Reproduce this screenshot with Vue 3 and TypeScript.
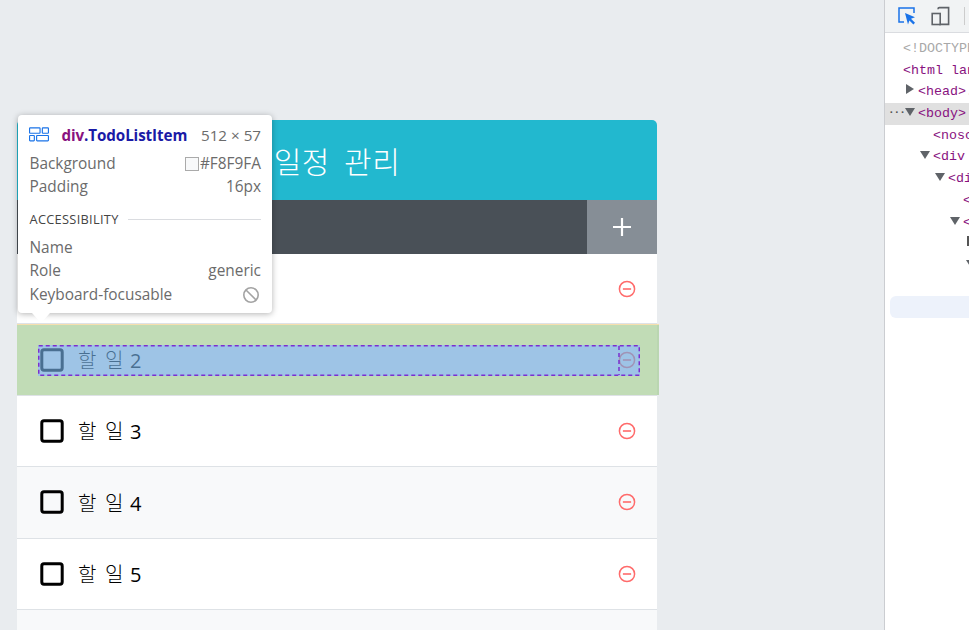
<script setup lang="ts">
interface Row { word: string; num: number }
const rows: Row[] = [1, 2, 3, 4, 5, 6].map((n) => ({ word: '할 일', num: n }))
interface Line { text: string; cls: string; indent: number; arrow?: string }
const lines: Line[] = [
  { text: '<!DOCTYPE html>', cls: 'doctype', indent: 18 },
  { text: '<html lang="ko">', cls: '', indent: 18 },
  { text: '<head>...</head>', cls: '', indent: 33, arrow: 'right' },
  { text: '<body>', cls: 'sel', indent: 33, arrow: 'down' },
  { text: '<noscript>', cls: '', indent: 48 },
  { text: '<div id="root">', cls: '', indent: 48, arrow: 'down' },
  { text: '<div class="a">', cls: '', indent: 63, arrow: 'down' },
  { text: '<h1>', cls: '', indent: 78 },
  { text: '<div>', cls: '', indent: 78, arrow: 'down' },
]
</script>

<template>
  <div class="page">
    <main class="main">
      <section class="card">
        <header class="title">일정 관리</header>
        <div class="bar">
          <div class="field"></div>
          <div class="add">
            <svg width="20" height="20" viewBox="0 0 20 20"><path d="M10 1v18M1 10h18" stroke="#fff" stroke-width="2.2" fill="none" /></svg>
          </div>
        </div>
        <div class="list">
          <div v-for="r in rows" :key="r.num" class="item">
            <svg class="check" width="26" height="26" viewBox="0 0 26 26"><rect x="2.8" y="2.8" width="20.4" height="20.4" rx="2.2" fill="none" stroke="#000" stroke-width="3" /></svg>
            <span class="label">{{ r.word }} <span class="num">{{ r.num }}</span></span>
            <svg class="remove" width="20" height="20" viewBox="0 0 20 20"><circle cx="10" cy="10" r="7.6" fill="none" stroke="#ff6b6b" stroke-width="1.5" /><path d="M5.9 10h8.2" stroke="#ff6b6b" stroke-width="1.6" /></svg>
          </div>
        </div>
      </section>

      <div class="hl">
        <div class="hl-content">
          <svg class="hl-lines" width="602" height="31" viewBox="0 0 602 31" fill="none" stroke="#7b2fd0" stroke-width="1.5" stroke-dasharray="4 3"><rect x=".75" y=".75" width="600.5" height="29.5" /><path d="M581 1v29" /></svg>
        </div>
      </div>

      <div class="tip">
        <div class="tip-head">
          <svg class="tip-icon" width="20" height="15" viewBox="0 0 21 15" fill="none" stroke="#1a73e8" stroke-width="1.2"><rect x=".6" y=".6" width="11" height="5.6" rx=".6" /><rect x="14" y=".6" width="6.4" height="5.6" rx=".6" /><rect x=".6" y="8.6" width="5" height="5.6" rx=".6" /><rect x="8" y="8.6" width="12.4" height="5.6" rx=".6" /></svg>
          <span class="tip-name"><b class="tag">div</b><b class="klass">.TodoListItem</b></span>
          <span class="tip-size">512 × 57</span>
        </div>
        <div class="tip-row"><span>Background</span><span class="val"><i class="swatch"></i>#F8F9FA</span></div>
        <div class="tip-row"><span>Padding</span><span class="val">16px</span></div>
        <div class="tip-sec"><span>ACCESSIBILITY</span><i class="rule"></i></div>
        <div class="tip-row"><span>Name</span><span class="val"></span></div>
        <div class="tip-row"><span>Role</span><span class="val">generic</span></div>
        <div class="tip-row kb"><span>Keyboard-focusable</span>
          <svg width="18" height="18" viewBox="0 0 18 18" fill="none" stroke="#a3a3a3" stroke-width="1.6"><circle cx="9" cy="9" r="7.2" /><path d="M4 4l10 10" /></svg>
        </div>
        <i class="tip-arrow"></i>
      </div>
    </main>

    <aside class="tools">
      <div class="toolbar">
        <svg width="20" height="20" viewBox="0 0 20 20" fill="none"><path d="M7 16H2V2h15v5" stroke="#1a73e8" stroke-width="1.5" /><path d="M8 7l10 4.2-4 1.6 4 4-1.6 1.6-4-4-1.4 4z" fill="#1a73e8" /></svg>
        <svg width="20" height="20" viewBox="0 0 20 20" fill="none" stroke="#5f6368" stroke-width="1.6"><path d="M7 3.2c0-1 .6-1.6 1.4-1.6h9.2v16.8H8" /><rect x="1.2" y="7.5" width="8" height="11" fill="#f1f3f4" /></svg>
        <i class="sep"></i>
      </div>
      <div class="tree">
        <div v-for="l in lines" :key="l.text" class="line" :class="l.cls" :style="{ paddingLeft: l.indent + 'px' }">
          <span v-if="l.cls === 'sel'" class="dots">···</span>
          <i v-if="l.arrow" class="arrow" :class="l.arrow"></i>
          <span class="code">{{ l.text }}</span>
        </div>
        <div class="line tail"><i class="mark"></i></div>
        <div class="line tail"><i class="arrow down low"></i></div>
        <div class="selbar"></div>
      </div>
    </aside>
  </div>
</template>

<style>
html, body { margin: 0; background: #e9ecef; overflow: hidden; }
</style>

<style scoped>
.page { display: flex; height: 630px; overflow: hidden; }
.main { position: relative; flex: 1; min-width: 0; padding: 120px 0 0 17px; background: #e9ecef; box-sizing: border-box; overflow: hidden; }
.card { width: 640px; border-radius: 5px 5px 0 0; overflow: hidden; font-family: "Noto Sans CJK KR", sans-serif; }
.title { height: 80px; background: #22b8cf; color: #fff; font-size: 30px; font-weight: 300; letter-spacing: .5px; word-spacing: 7px; display: flex; align-items: center; justify-content: center; }
.bar { display: flex; height: 54px; background: #495057; }
.field { flex: 1; }
.add { width: 70px; background: #868e96; display: flex; align-items: center; justify-content: center; }
.list { background: #fff; }
.item { height: 71.4px; box-sizing: border-box; display: flex; align-items: center; padding: 0 20px; border-bottom: 1px solid #dee2e6; background: #fff; }
.item:first-child { height: 70.4px; }
.item:nth-child(even) { background: #f8f9fa; }
.check { flex: none; margin-left: 2px; }
.label { flex: 1; margin-left: 13px; font-size: 20px; font-weight: 300; color: #000; word-spacing: 3px; letter-spacing: .6px; }
.num { margin-left: -2px; font-family: "Open Sans", sans-serif; font-weight: 400; letter-spacing: 0; }
.remove { flex: none; }

.hl { position: absolute; left: 17px; top: 325px; width: 642px; height: 70px; box-sizing: border-box; border: solid rgba(147, 196, 125, .55); border-width: 20px 19px 19px 21px; }
.hl::before { content: ""; position: absolute; left: -21px; right: -19px; top: -21px; height: 1px; background: #f6dfae; }
.hl-content { position: relative; height: 31px; background: rgba(111, 168, 220, .66); }
.hl-lines { display: block; }

.tip { position: absolute; left: 18px; top: 115px; width: 254px; height: 198px; box-sizing: border-box; padding: 10px 11px 0 11.5px; background: #fff; border-radius: 4px; box-shadow: 0 1px 6px rgba(0, 0, 0, .3); font-family: "Open Sans", sans-serif; font-size: 15.4px; color: #6b6b6b; }
.tip-head { display: flex; align-items: center; height: 20px; margin-bottom: 7px; font-size: 15.2px; }
.tip-name { margin-left: 13px; flex: 1; white-space: nowrap; letter-spacing: -.1px; }
.tag { color: #881280; }
.klass { color: #1a1aa6; }
.tip-size { color: #6b6b6b; white-space: nowrap; }
.tip-icon { flex: none; margin: -2px 0 0 -1px; }
.tip-row { display: flex; justify-content: space-between; align-items: center; height: 23px; white-space: nowrap; }
.tip-row.kb { margin-top: 1px; }
.tip-row.kb svg { margin-right: 1px; }
.val { display: flex; align-items: center; }
.swatch { width: 12px; height: 12px; margin-right: 1px; background: #f8f9fa; border: 1px solid #aaa; }
.tip-sec { display: flex; align-items: center; gap: 9px; height: 24px; margin: 9px 0 5px; font-size: 12.8px; color: #444; letter-spacing: .3px; }
.rule { flex: 1; height: 1px; background: #dadce0; }
.tip-arrow { position: absolute; left: 14px; top: 198px; width: 0; height: 0; border-left: 9px solid transparent; border-right: 9px solid transparent; border-top: 10px solid #fff; }

.tools { width: 85px; flex: none; box-sizing: border-box; background: #fff; border-left: 1px solid #cbcdd1; overflow: hidden; }
.toolbar { display: flex; align-items: center; gap: 14px; height: 33px; padding-left: 12px; box-sizing: border-box; background: #f1f3f4; border-bottom: 1px solid #dadce0; }
.sep { width: 1px; height: 18px; background: #ccc; margin-left: -1px; }
.tree { position: relative; padding-top: 5px; }
.line { position: relative; height: 21.7px; line-height: 21.7px; white-space: nowrap; font-family: "Liberation Mono", monospace; font-size: 13.33px; color: #881280; }
.doctype { color: #a8a8a8; }
.sel { background: #e0e0e0; }
.dots { position: absolute; left: 3px; top: -1px; color: #555; font-size: 11px; font-weight: 700; letter-spacing: -1px; }
.code { display: inline-block; }
.arrow { position: absolute; width: 0; height: 0; }
.arrow.right { margin-left: -12px; top: 3px; border-top: 5px solid transparent; border-bottom: 5px solid transparent; border-left: 8px solid #5f6368; }
.arrow.down { margin-left: -13px; top: 5px; border-left: 5px solid transparent; border-right: 5px solid transparent; border-top: 8px solid #5f6368; }
.tail { height: 21.7px; }
.mark { position: absolute; left: 82px; top: 3px; width: 3px; height: 10px; background: #555; }
.arrow.low { left: 94px; top: 5px; margin: -13px; margin-top: 0; }
.selbar { position: absolute; left: 5px; top: 263px; width: 90px; height: 22px; background: #edf2fb; border-radius: 6px 0 0 6px; }
</style>
